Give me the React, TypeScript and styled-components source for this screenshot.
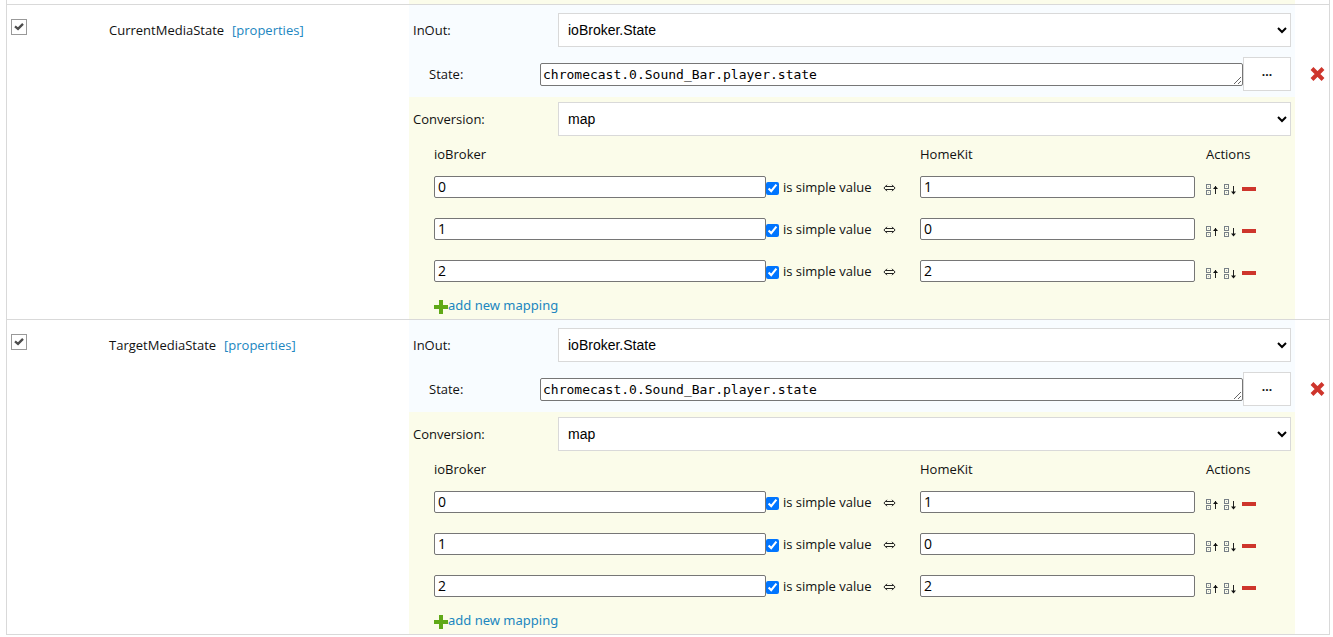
import React, { useState } from "react";
import styled, { createGlobalStyle } from "styled-components";

const BLUE = "#f8fcff";
const CREAM = "#fbfcea";
const LINE = "#d9d9d9";
const LINK = "#2086bf";

const GlobalStyle = createGlobalStyle`
  * { box-sizing: border-box; }
  body {
    margin: 0;
    background: #fff;
    color: #111;
    font: 13px/20px "Open Sans", "Noto Sans", sans-serif;
  }
`;

const Page = styled.main`
  margin: 0 3px 0 6px;
  border: 1px solid ${LINE};
  border-top: 0;
  border-bottom: 0;
`;

const Item = styled.section`
  display: grid;
  grid-template-columns: 102px 300px minmax(0, 1fr) 34px;
  border-bottom: 1px solid ${LINE};
`;

const ItemTail = styled.div`
  grid-column: 3;
  height: 4px;
  background: ${CREAM};
`;

const CheckCell = styled.label`
  display: block;
  padding: 14px 4px;
`;

const CheckFrame = styled.span`
  position: relative;
  display: block;
  width: 16px;
  height: 16px;
  svg {
    position: absolute;
    inset: 0;
    pointer-events: none;
  }
  input:not(:checked) + svg { display: none; }
`;

const FlatCheck = styled.input`
  appearance: none;
  display: block;
  width: 16px;
  height: 16px;
  margin: 0;
  border: 1px solid #999;
  background: #fff;
`;

const NameCell = styled.div`
  display: flex;
  align-items: flex-start;
  gap: 8px;
  padding-top: 15px;
`;

const Link = styled.a`
  color: ${LINK};
  text-decoration: none;
`;

const InOutPanel = styled.div`
  display: flex;
  flex-direction: column;
  gap: 10px;
  padding: 8px 4px 6px;
  background: ${BLUE};
`;

const ConversionPanel = styled.div`
  padding-top: 5px;
  background: ${CREAM};
`;

const FieldRow = styled.div<{ $inset?: boolean }>`
  display: flex;
  align-items: center;
  height: 34px;
  padding: ${(p) => (p.$inset ? "0 4px" : "0")};
`;

const FieldLabel = styled.label<{ $nested?: boolean }>`
  flex: none;
  width: ${(p) => (p.$nested ? "127px" : "145px")};
  padding-left: ${(p) => (p.$nested ? "16px" : "0")};
`;

const Select = styled.select`
  flex: 1;
  min-width: 0;
  height: 34px;
  padding: 0 5px;
  border: 1px solid ${LINE};
  border-radius: 0;
  background: #fff;
  color: #000;
  font: 14px "Liberation Sans", Arial, sans-serif;
`;

const StateText = styled.textarea`
  flex: 1;
  min-width: 0;
  height: 23px;
  padding: 2px;
  border: 1px solid #767676;
  border-radius: 2px;
  overflow: hidden;
  white-space: nowrap;
  resize: both;
  color: #000;
  font: 13px/17px "DejaVu Sans Mono", monospace;
`;

const BrowseButton = styled.button`
  flex: none;
  width: 48px;
  height: 34px;
  padding: 0 0 6px;
  border: 1px solid ${LINE};
  background: #fff;
  color: #111;
  font: bold 12px "Open Sans", sans-serif;
`;

const IconButton = styled.button`
  display: block;
  flex: none;
  padding: 0;
  border: 0;
  background: none;
  svg { display: block; }
`;

const DeleteCell = styled.div`
  display: flex;
  justify-content: flex-end;
  align-items: flex-start;
  padding: 62px 4px 0 0;
`;

const MapTable = styled.table`
  width: 100%;
  padding-left: 25px;
  border-spacing: 0;
  table-layout: fixed;
`;

const HeadCell = styled.th<{ $width?: string }>`
  width: ${(p) => p.$width ?? "auto"};
  height: 30px;
  padding: 6px 0 0;
  font-weight: normal;
  text-align: left;
`;

const Cell = styled.td`
  height: 42px;
  padding: 0;
`;

const CellLine = styled.div`
  display: flex;
  align-items: center;
`;

const ValueInput = styled.input`
  flex: 1;
  min-width: 0;
  height: 22px;
  padding: 0 3px 1px;
  border: 1px solid #767676;
  border-radius: 2px;
  background: #fff;
  color: #000;
  font: 14px "Open Sans", sans-serif;
`;

const HomeKitLine = styled(CellLine)`
  padding-right: 11px;
`;

const SimpleLabel = styled.label`
  display: flex;
  align-items: center;
  flex: none;
  gap: 4px;
  width: 117px;
  white-space: nowrap;
  input {
    flex: none;
    width: 13px;
    height: 13px;
    margin: 2px 0 0;
    accent-color: #0075ff;
  }
`;

const Both = styled.span`
  flex: none;
  width: 37px;
  padding-top: 1px;
  svg { display: block; }
`;

const Actions = styled(CellLine)`
  gap: 5px;
  padding-top: 5px;
`;

const AddLink = styled.a`
  display: flex;
  align-items: center;
  height: 27px;
  padding: 0 0 1px 25px;
  color: ${LINK};
  font-family: "Noto Sans", sans-serif;
  text-decoration: none;
  svg { margin-top: 3px; }
`;

const CheckMark = () => (
  <svg width="16" height="16" viewBox="0 0 16 16" aria-hidden="true">
    <path d="M4 7.4 L7 9.9 L12 4.9" fill="none" stroke="#4d4d4d" strokeWidth="2.3" />
  </svg>
);

const CrossIcon = () => (
  <svg width="15" height="14" viewBox="0 0 15 14" aria-hidden="true">
    <path d="M2 1.5 L13 12.5 M13 1.5 L2 12.5" stroke="#ce352c" strokeWidth="4" />
  </svg>
);

const PlusIcon = () => (
  <svg width="14" height="14" viewBox="0 0 14 14" aria-hidden="true">
    <path d="M7 0 V14 M0 7 H14" stroke="#60a917" strokeWidth="4" />
  </svg>
);

const MinusIcon = () => (
  <svg width="14" height="12" viewBox="0 0 14 12" aria-hidden="true">
    <path d="M0 5 H14" stroke="#ce352c" strokeWidth="4" />
  </svg>
);

const BothWaysIcon = () => (
  <svg width="13" height="8" viewBox="0 0 13 8" aria-hidden="true">
    <path
      d="M4 .8 L.9 4 L4 7.2 M9 .8 L12.1 4 L9 7.2 M2.5 2.5 H10.5 M2.5 5.5 H10.5"
      fill="none"
      stroke="#222"
    />
  </svg>
);

const MoveIcon = ({ down }: { down?: boolean }) => (
  <svg width="13" height="12" viewBox="0 0 13 12" aria-hidden="true">
    <g fill="none" stroke="#777f86">
      <rect x=".5" y=".5" width="4" height="4" />
      <rect x=".5" y="6.5" width="4" height="4" />
    </g>
    <path d="M2 2.5 H3 M2 8.5 H3" stroke="#a9b4bc" />
    <path d="M9.5 2 V10" stroke="#222" />
    <path d={down ? "M7 7.5 H12 L9.5 10.5 Z" : "M7 5 H12 L9.5 2 Z"} fill="#111" />
  </svg>
);

type Pair = { broker: string; homekit: string };

const MappingRow = ({ pair }: { pair: Pair }) => (
  <tr>
    <Cell>
      <CellLine>
        <ValueInput aria-label="ioBroker value" defaultValue={pair.broker} />
        <SimpleLabel>
          <input type="checkbox" defaultChecked />
          is simple value
        </SimpleLabel>
        <Both>
          <BothWaysIcon />
        </Both>
      </CellLine>
    </Cell>
    <Cell>
      <HomeKitLine>
        <ValueInput aria-label="HomeKit value" defaultValue={pair.homekit} />
      </HomeKitLine>
    </Cell>
    <Cell>
      <Actions>
        <IconButton type="button" aria-label="Move up">
          <MoveIcon />
        </IconButton>
        <IconButton type="button" aria-label="Move down">
          <MoveIcon down />
        </IconButton>
        <IconButton type="button" aria-label="Remove mapping">
          <MinusIcon />
        </IconButton>
      </Actions>
    </Cell>
  </tr>
);

const pairs: Pair[] = [
  { broker: "0", homekit: "1" },
  { broker: "1", homekit: "0" },
  { broker: "2", homekit: "2" },
];

const Characteristic = ({ name }: { name: string }) => {
  const [state, setState] = useState("chromecast.0.Sound_Bar.player.state");
  return (
    <Item>
      <CheckCell>
        <CheckFrame>
          <FlatCheck type="checkbox" defaultChecked aria-label={name} />
          <CheckMark />
        </CheckFrame>
      </CheckCell>
      <NameCell>
        <span>{name}</span>
        <Link href="#properties">[properties]</Link>
      </NameCell>
      <div>
        <InOutPanel>
          <FieldRow>
            <FieldLabel htmlFor={`${name}-inout`}>InOut:</FieldLabel>
            <Select id={`${name}-inout`}>
              <option>ioBroker.State</option>
            </Select>
          </FieldRow>
          <FieldRow>
            <FieldLabel $nested htmlFor={`${name}-state`}>
              State:
            </FieldLabel>
            <StateText
              id={`${name}-state`}
              rows={1}
              spellCheck={false}
              value={state}
              onChange={(e) => setState(e.target.value)}
            />
            <BrowseButton type="button">...</BrowseButton>
          </FieldRow>
        </InOutPanel>
        <ConversionPanel>
          <FieldRow $inset>
            <FieldLabel htmlFor={`${name}-conversion`}>Conversion:</FieldLabel>
            <Select id={`${name}-conversion`}>
              <option>map</option>
            </Select>
          </FieldRow>
          <MapTable>
            <thead>
              <tr>
                <HeadCell>ioBroker</HeadCell>
                <HeadCell $width="286px">HomeKit</HeadCell>
                <HeadCell $width="89px">Actions</HeadCell>
              </tr>
            </thead>
            <tbody>
              {pairs.map((pair) => (
                <MappingRow key={pair.broker} pair={pair} />
              ))}
            </tbody>
          </MapTable>
          <AddLink href="#add">
            <PlusIcon />
            add new mapping
          </AddLink>
        </ConversionPanel>
      </div>
      <DeleteCell>
        <IconButton type="button" aria-label="Delete">
          <CrossIcon />
        </IconButton>
      </DeleteCell>
    </Item>
  );
};

export default function App() {
  return (
    <>
      <GlobalStyle />
      <Page>
        <Item>
          <ItemTail />
        </Item>
        <Characteristic name="CurrentMediaState" />
        <Characteristic name="TargetMediaState" />
      </Page>
    </>
  );
}
